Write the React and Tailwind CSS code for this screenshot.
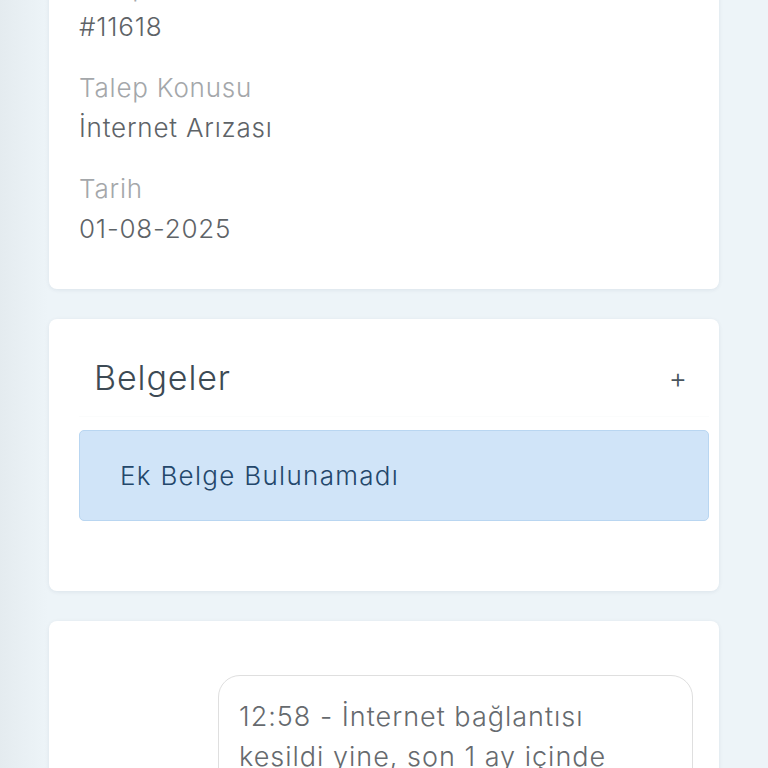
export default function App() {
  const font = { fontFamily: 'Inter, "Noto Sans", sans-serif' };
  return (
    <div
      className="h-[768px] w-[768px] overflow-hidden bg-[linear-gradient(to_right,#e4ebef_0px,#eaf1f5_30px,#edf4f8_48px)]"
      style={font}
    >
      <div className="mt-[-73px] flex flex-col gap-[30px] pl-[49px] pr-[49px]">
        {/* Card 1 */}
        <div className="rounded-[8px] bg-white px-[30px] pb-[40px] pt-[40px] shadow-[0_1px_4px_rgba(0,40,80,0.08)]">
          <div className="flex flex-col gap-[21px]">
            {[
              ["Talep No", "#11618"],
              ["Talep Konusu", "İnternet Arızası"],
              ["Tarih", "01-08-2025"],
            ].map(([l, v]) => (
              <div key={l} className="flex flex-col">
                <div className="text-[26px] font-light leading-[40px] tracking-[0.8px] text-[#a4a7aa]">{l}</div>
                <div className="text-[26px] font-light leading-[40px] tracking-[0.8px] text-[#5e6367]">{v}</div>
              </div>
            ))}
          </div>
        </div>

        {/* Card 2 */}
        <div className="rounded-[8px] bg-white pb-[70px] pl-[30px] pr-[10px] pt-[20px] shadow-[0_1px_4px_rgba(0,40,80,0.08)]">
          <div className="flex h-[78px] items-center justify-between border-b border-[#fbfcfc] pl-[15px] pr-[22px]">
            <div className="text-[34px] font-light tracking-[0.9px] text-[#3d4a54]">Belgeler</div>
            <div className="text-[28px] font-light leading-none text-[#4a555d]">+</div>
          </div>
          <div className="mt-[13px] flex h-[91px] items-center rounded-[5px] border border-[#b9d6f1] bg-[#d0e4f8] pl-[40px]">
            <div className="text-[26px] font-light tracking-[1.3px] text-[#23476b]">Ek Belge Bulunamadı</div>
          </div>
        </div>

        {/* Card 3 */}
        <div className="h-[300px] rounded-[8px] bg-white pl-[169px] pr-[26px] pt-[54px] shadow-[0_1px_4px_rgba(0,40,80,0.08)]">
          <div className="rounded-[22px] border border-[#dfdfdf] pb-[20px] pl-[20px] pr-[28px] pt-[21px]">
            <div className="text-[27px] font-light leading-[40px] tracking-[1px] text-[#666a6e]">
              12:58 - İnternet bağlantısı kesildi yine, son 1 ay içinde birçok kez yaşandı.
            </div>
          </div>
        </div>
      </div>
    </div>
  );
}
